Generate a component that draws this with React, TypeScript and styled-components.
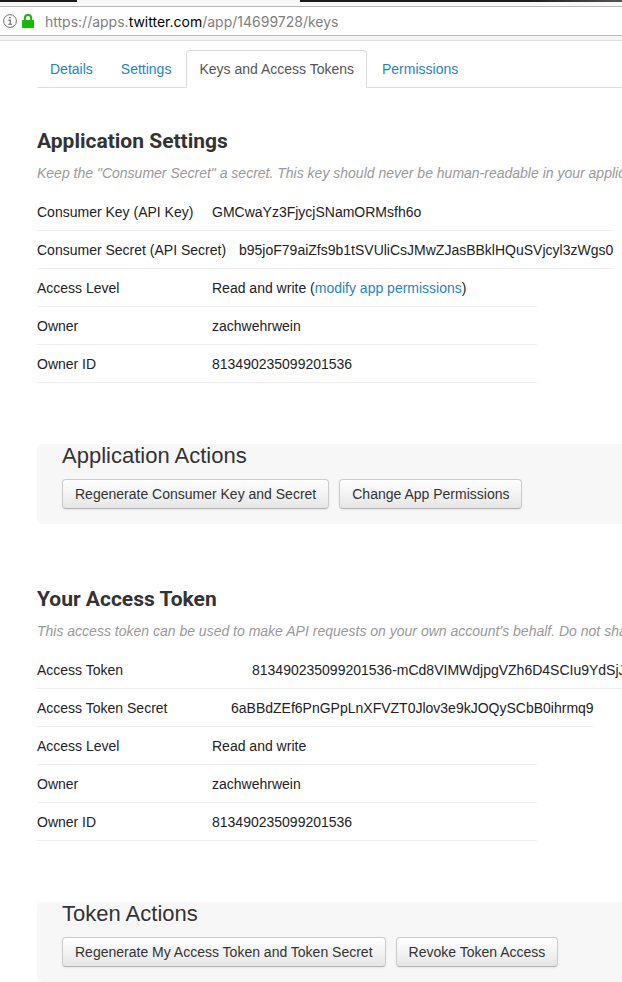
import React from "react";
import styled, { createGlobalStyle } from "styled-components";

const GlobalStyle = createGlobalStyle`
  * { box-sizing: border-box; }
  body {
    margin: 0;
    overflow-x: hidden;
    background: #fff;
    color: #222;
    font: 14px/18px "Liberation Sans", Arial, sans-serif;
  }
`;

const TabStrip = styled.div`
  display: flex;
  justify-content: space-between;
  height: 6px;
  background: #f8f8f8;
`;

const DarkTab = styled.span<{ $grow?: boolean }>`
  height: 2px;
  width: 77px;
  background: #1c1a1b;
  ${(p) => p.$grow && "width: auto; flex: 1; margin-left: 223px; background: linear-gradient(90deg, #1c1a1b 70%, #555);"}
`;

const AddressBar = styled.div`
  display: flex;
  align-items: center;
  gap: 5px;
  height: 30px;
  padding-left: 3px;
  border-top: 1px solid #b9b9b9;
  border-bottom: 1px solid #b9b9b9;
  background: #fff;
`;

const Address = styled.div`
  margin-left: 6px;
  padding-top: 2px;
  font: 14px/18px Inter, sans-serif;
  white-space: nowrap;
  color: #808080;
  strong { font-weight: 400; color: #000; }
`;

const Toolbar = styled.div`
  height: 5px;
  background: #f5f5f5;
  border-bottom: 1px solid #dedede;
`;

const Page = styled.main`
  padding-left: 37px;
  overflow: hidden;
`;

const Tabs = styled.nav`
  display: flex;
  gap: 2px;
  margin-top: 9px;
  height: 38px;
  border-bottom: 1px solid #ddd;
`;

const Tab = styled.a<{ $active?: boolean }>`
  height: 38px;
  padding: 9px 12px;
  border: 1px solid ${(p) => (p.$active ? "#ddd" : "transparent")};
  border-bottom-color: ${(p) => (p.$active ? "#fff" : "#ddd")};
  border-radius: 4px 4px 0 0;
  color: ${(p) => (p.$active ? "#555" : "#1f85bf")};
  text-decoration: none;
  white-space: nowrap;
`;

const Section = styled.section<{ $first?: boolean }>`
  margin-top: ${(p) => (p.$first ? "38px" : "60px")};
`;

const Title = styled.h2`
  margin: 0;
  font: 700 21px/30px Roboto, sans-serif;
  color: #333;
  white-space: nowrap;
`;

const Note = styled.p`
  margin: 8px 0 11px;
  color: #999;
  font-style: italic;
  white-space: nowrap;
`;

const Details = styled.dl`
  margin: 0;
`;

const Row = styled.div<{ $width?: number }>`
  display: flex;
  width: ${(p) => p.$width ?? 500}px;
  padding: 10px 0 9px;
  border-bottom: 1px solid #eee;
  white-space: nowrap;
`;

const Label = styled.dt<{ $width?: number }>`
  flex: none;
  width: ${(p) => p.$width ?? 175}px;
`;

const Value = styled.dd`
  margin: 0;
`;

const Link = styled.a`
  color: #1f85bf;
  text-decoration: none;
`;

const Actions = styled.div`
  margin-top: 61px;
  padding: 0 0 15px 25px;
  border-radius: 5px 0 0 5px;
  background: #f7f7f7;
`;

const ActionsTitle = styled.h3`
  margin: 0 0 11px;
  font-size: 22px;
  font-weight: 400;
  line-height: 24px;
  color: #333;
  white-space: nowrap;
`;

const Buttons = styled.div`
  display: flex;
  gap: 10px;
`;

const Button = styled.button`
  height: 30px;
  padding: 0 12px;
  border: 1px solid #ccc;
  border-bottom-color: #b3b3b3;
  border-radius: 4px;
  background: linear-gradient(#fff, #e6e6e6);
  box-shadow: 0 1px 2px rgba(0, 0, 0, 0.08);
  font: inherit;
  color: #333;
  white-space: nowrap;
`;

type Entry = { label: string; value: React.ReactNode; width?: number; labelWidth?: number };

const appEntries: Entry[] = [
  { label: "Consumer Key (API Key)", value: "GMCwaYz3FjycjSNamORMsfh6o", width: 577 },
  {
    label: "Consumer Secret (API Secret)",
    value: "b95joF79aiZfs9b1tSVUliCsJMwZJasBBklHQuSVjcyl3zWgs0",
    width: 577,
    labelWidth: 202,
  },
  {
    label: "Access Level",
    value: (
      <>
        Read and write (<Link href="#permissions">modify app permissions</Link>)
      </>
    ),
  },
  { label: "Owner", value: "zachwehrwein" },
  { label: "Owner ID", value: "813490235099201536" },
];

const tokenEntries: Entry[] = [
  {
    label: "Access Token",
    value: "813490235099201536-mCd8VIMWdjpgVZh6D4SCIu9YdSjJ",
    width: 600,
    labelWidth: 215,
  },
  {
    label: "Access Token Secret",
    value: "6aBBdZEf6PnGPpLnXFVZT0Jlov3e9kJOQySCbB0ihrmq9",
    width: 556,
    labelWidth: 194,
  },
  { label: "Access Level", value: "Read and write" },
  { label: "Owner", value: "zachwehrwein" },
  { label: "Owner ID", value: "813490235099201536" },
];

function Settings({ entries }: { entries: Entry[] }) {
  return (
    <Details>
      {entries.map((e) => (
        <Row key={e.label} $width={e.width}>
          <Label $width={e.labelWidth}>{e.label}</Label>
          <Value>{e.value}</Value>
        </Row>
      ))}
    </Details>
  );
}

function ActionPanel({ title, actions }: { title: string; actions: string[] }) {
  return (
    <Actions>
      <ActionsTitle>{title}</ActionsTitle>
      <Buttons>
        {actions.map((a) => (
          <Button key={a} type="button">{a}</Button>
        ))}
      </Buttons>
    </Actions>
  );
}

export default function App() {
  return (
    <>
      <GlobalStyle />
      <header>
        <TabStrip>
          <DarkTab />
          <DarkTab $grow />
        </TabStrip>
        <AddressBar>
          <svg width="14" height="14" viewBox="0 0 14 14" aria-hidden="true">
            <circle cx="7" cy="7" r="6.4" fill="none" stroke="#737373" strokeWidth="1" />
            <path d="M5.4 6.1H7.2v4M5.2 10.3h3.8" fill="none" stroke="#666" strokeWidth="1.1" />
            <circle cx="7" cy="3.6" r="0.9" fill="#666" />
          </svg>
          <svg width="12" height="14" viewBox="0 0 12 14" aria-hidden="true">
            <path d="M2.9 7V4a3.1 3.1 0 0 1 6.2 0v3" fill="none" stroke="#12bc00" strokeWidth="2" />
            <rect x="0" y="6" width="12" height="8" rx="1" fill="#12bc00" />
          </svg>
          <Address>
            https://apps.<strong>twitter.com</strong>/app/14699728/keys
          </Address>
        </AddressBar>
        <Toolbar />
      </header>
      <Page>
        <Tabs>
          <Tab href="#details">Details</Tab>
          <Tab href="#settings">Settings</Tab>
          <Tab href="#keys" $active aria-current="page">Keys and Access Tokens</Tab>
          <Tab href="#permissions">Permissions</Tab>
        </Tabs>
        <Section $first>
          <Title>Application Settings</Title>
          <Note>
            Keep the "Consumer Secret" a secret. This key should never be human-readable in your application.
          </Note>
          <Settings entries={appEntries} />
          <ActionPanel
            title="Application Actions"
            actions={["Regenerate Consumer Key and Secret", "Change App Permissions"]}
          />
        </Section>
        <Section>
          <Title>Your Access Token</Title>
          <Note>
            This access token can be used to make API requests on your own account's behalf. Do not share
          </Note>
          <Settings entries={tokenEntries} />
          <ActionPanel
            title="Token Actions"
            actions={["Regenerate My Access Token and Token Secret", "Revoke Token Access"]}
          />
        </Section>
      </Page>
    </>
  );
}
